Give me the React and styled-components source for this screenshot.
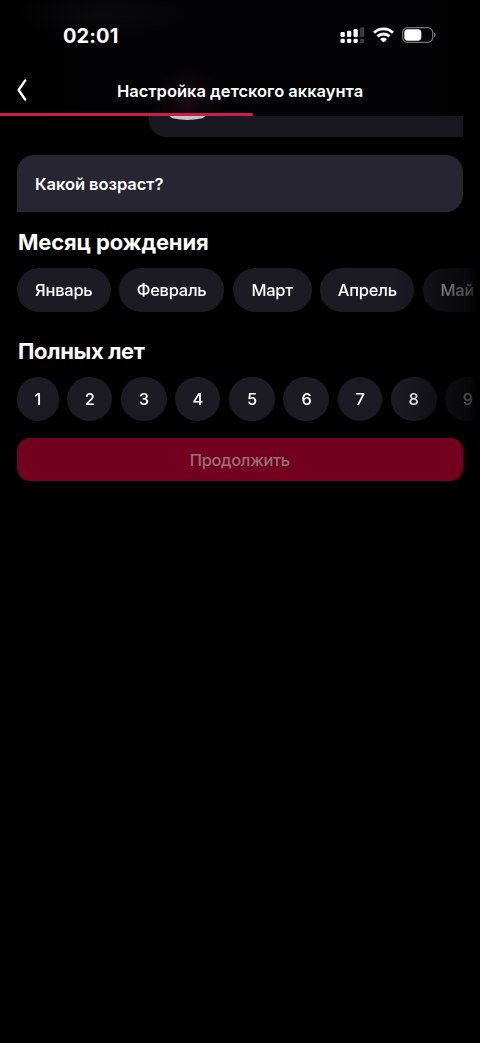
import styled, { createGlobalStyle } from "styled-components";

const months = [
    { label: "Январь", width: 93.5 },
    { label: "Февраль", width: 105 },
    { label: "Март", width: 79 },
    { label: "Апрель", width: 94 },
    { label: "Май", width: 69 },
];

const ages = [
    { label: "1", width: 41.5 },
    { label: "2", width: 45 },
    { label: "3", width: 46 },
    { label: "4", width: 45 },
    { label: "5", width: 46 },
    { label: "6", width: 46 },
    { label: "7", width: 44 },
    { label: "8", width: 46 },
    { label: "9", width: 45 },
];

const SignalIcon = () => (
    <svg width="25" height="17" viewBox="0 0 25 17" fill="#fff">
        <rect x="0.5" y="5" width="4.3" height="5" rx="1.3" />
        <rect x="7" y="3.7" width="4.3" height="6.3" rx="1.3" />
        <rect x="13.5" y="2" width="4.3" height="8" rx="1.3" />
        <rect x="0.5" y="11.7" width="4.3" height="4.4" rx="1.4" />
        <rect x="7" y="11.7" width="4.3" height="4.4" rx="1.4" />
        <rect x="13.5" y="11.7" width="4.3" height="4.4" rx="1.4" />
        <rect x="20" y="0.3" width="4.3" height="9.7" rx="1.3" fill="#3b3b3d" />
        <rect x="20" y="11.7" width="4.3" height="4.4" rx="1.4" fill="#3b3b3d" />
    </svg>
);

const WifiIcon = () => (
    <svg width="21" height="16" viewBox="0 0 21 16" fill="none" stroke="#fff" strokeWidth="2.9">
        <path d="M1 5.8C6.3 0.6 14.7 0.6 20 5.8" />
        <path d="M4.5 9.4C7.8 6.2 13.2 6.2 16.5 9.4" />
        <path d="M10.5 15.5L7.1 12.2C9 10.4 12 10.4 13.9 12.2Z" fill="#fff" stroke="none" />
    </svg>
);

const BatteryIcon = () => (
    <svg width="34" height="16" viewBox="0 0 34 16">
        <rect x="0.7" y="0.7" width="30" height="14.6" rx="4.8" fill="none" stroke="#77777a" strokeWidth="1.2" />
        <rect x="2.3" y="2.3" width="17" height="11.4" rx="3.4" fill="#fff" />
        <path d="M32 5.5C34 6.2 34 9.8 32 10.5Z" fill="#77777a" />
    </svg>
);

const App = () => {
    return (
        <>
            <GlobalStyle />
            <Screen>
                <Header>
                    <StatusBar>
                        <Time>02:01</Time>
                        <StatusIcons>
                            <SignalIcon />
                            <WifiIcon />
                            <BatteryIcon />
                        </StatusIcons>
                    </StatusBar>
                    <NavBar>
                        <BackButton aria-label="Назад">
                            <svg width="10" height="22" viewBox="0 0 10 22" fill="none" stroke="#fff" strokeWidth="2.3" strokeLinecap="round" strokeLinejoin="round">
                                <path d="M8.2 1.5L1.6 11L8.2 20.5" />
                            </svg>
                        </BackButton>
                        <Title>Настройка детского аккаунта</Title>
                        <span />
                    </NavBar>
                    <Progress />
                </Header>
                <Content>
                    <Reply>
                        <Avatar />
                    </Reply>
                    <Question>Какой возраст?</Question>
                    <SectionTitle $spacing="-0.16px">Месяц рождения</SectionTitle>
                    <ChipRow>
                        {months.map((month) => (
                            <Chip key={month.label} $width={month.width}>
                                {month.label}
                            </Chip>
                        ))}
                    </ChipRow>
                    <SectionTitle $top="27px" $height="38.7px" $spacing="-0.35px">
                        Полных лет
                    </SectionTitle>
                    <ChipRow>
                        {ages.map((age) => (
                            <Chip key={age.label} $width={age.width}>
                                {age.label}
                            </Chip>
                        ))}
                    </ChipRow>
                    <SubmitButton disabled>Продолжить</SubmitButton>
                </Content>
            </Screen>
        </>
    );
};

const GlobalStyle = createGlobalStyle`
    * {
        box-sizing: border-box;
    }

    body {
        margin: 0;
        background: #000;
        overflow: hidden;
    }

    button {
        font-family: inherit;
        border: none;
    }
`;

const Screen = styled.div`
    height: 1043px;
    overflow: hidden;
    background: #000;
    color: #fff;
    font-family: Inter, sans-serif;
`;

const Header = styled.header`
    height: 116px;
    background:
        radial-gradient(ellipse 34px 38px at 188px 104px, rgba(50, 15, 30, 0.4), transparent),
        radial-gradient(ellipse 90px 26px at 100px 14px, rgba(14, 14, 16, 0.6), transparent),
        linear-gradient(90deg, #000 0%, #030305 30%, #030305 85%, #000 100%);
`;

const StatusBar = styled.div`
    display: flex;
    justify-content: space-between;
    height: 66px;
    padding: 24px 44px 0 63px;
`;

const Time = styled.span`
    font-size: 20px;
    line-height: 24px;
    font-weight: 700;
    letter-spacing: 0.1px;
`;

const StatusIcons = styled.div`
    display: flex;
    align-items: flex-start;
    gap: 8px;
    padding-top: 3px;
`;

const NavBar = styled.div`
    display: grid;
    grid-template-columns: 32px 1fr 32px;
    align-items: center;
    height: 47px;
    padding: 0 16px;
`;

const BackButton = styled.button`
    display: flex;
    padding: 0 0 0 1px;
    background: none;
`;

const Title = styled.h1`
    margin: 0;
    padding-top: 2px;
    text-align: center;
    font-size: 16.5px;
    line-height: 22px;
    font-weight: 600;
    white-space: nowrap;
`;

const Progress = styled.div`
    width: 253px;
    height: 3px;
    border-radius: 0 2px 2px 0;
    background: #d01c4a;
`;

const Content = styled.main`
    padding: 0 17.5px 0 17px;
`;

const Reply = styled.div`
    height: 21px;
    margin-left: 131.5px;
    padding-left: 21px;
    overflow: hidden;
    border-radius: 0 0 0 17px;
    background: #191820;
`;

const Avatar = styled.div`
    width: 35px;
    height: 4px;
    border-radius: 0 0 18px 18px / 0 0 4px 4px;
    background: #c5c3c6;
`;

const Question = styled.div`
    height: 57px;
    margin-top: 18px;
    padding-left: 18px;
    border-radius: 17px 17px 17px 0;
    background: #282533;
    font-size: 16.5px;
    line-height: 59px;
    font-weight: 600;
    letter-spacing: -0.05px;
`;

const SectionTitle = styled.h2`
    margin: ${(props) => props.$top || "18px"} 0 0;
    height: ${(props) => props.$height || "38px"};
    padding-left: 1px;
    font-size: 22px;
    line-height: 24px;
    font-weight: 700;
    letter-spacing: ${(props) => props.$spacing || "0"};
`;

const ChipRow = styled.div`
    display: flex;
    gap: 8.6px;
    margin-right: -17.5px;
    overflow: hidden;
    mask-image: linear-gradient(
        90deg,
        #000 calc(100% - 90px),
        rgba(0, 0, 0, 0.86) calc(100% - 66px),
        rgba(0, 0, 0, 0.45) calc(100% - 36px),
        rgba(0, 0, 0, 0.28) calc(100% - 10px),
        transparent calc(100% - 4px)
    );
`;

const Chip = styled.button`
    flex: none;
    width: ${(props) => props.$width}px;
    height: 43.5px;
    padding: 0;
    border-radius: 22px;
    background: #1c1a23;
    color: #fff;
    font-size: 16.5px;
    line-height: 22px;
    font-weight: 500;
    letter-spacing: -0.25px;
`;

const SubmitButton = styled.button`
    width: 100%;
    height: 43.6px;
    margin-top: 17.2px;
    padding: 1px 0 0;
    border-radius: 13px;
    background: #740020;
    color: #957078;
    font-size: 16.5px;
    font-weight: 500;
    letter-spacing: -0.38px;
`;

export default App;
